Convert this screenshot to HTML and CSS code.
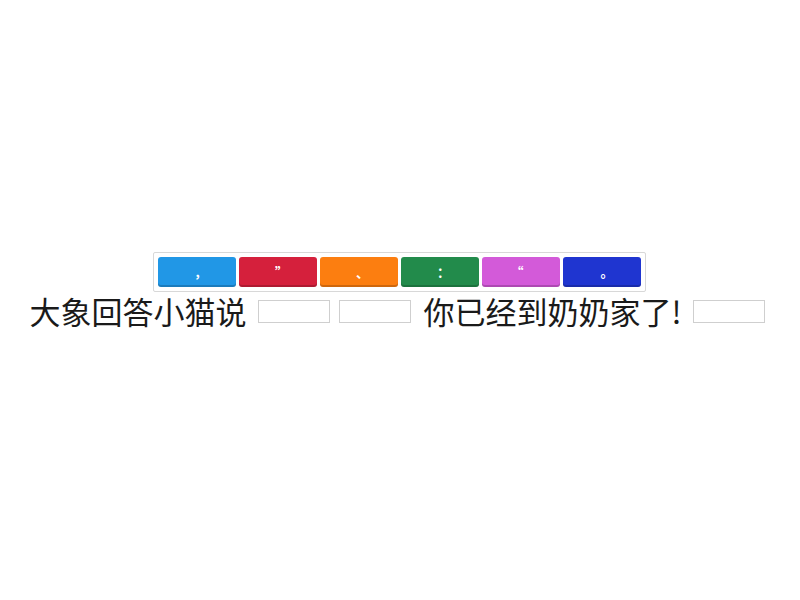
FILE: index.html
```html
<!DOCTYPE html>
<html lang="zh">
<head>
<meta charset="utf-8">
<title>标点符号</title>
<link rel="stylesheet" href="styles.css">
</head>
<body>
<main class="page">
  <div class="palette">
    <div class="tile blue nudge-right">，</div>
    <div class="tile red nudge-right">”</div>
    <div class="tile orange nudge-right">、</div>
    <div class="tile green nudge-right">：</div>
    <div class="tile purple nudge-left">“</div>
    <div class="tile navy nudge-far">。</div>
  </div>
  <div class="sentence">
    <span class="text first">大象回答小猫说</span>
    <span class="blank"></span>
    <span class="blank"></span>
    <span class="text second">你已经到奶奶家了!</span>
    <span class="blank"></span>
  </div>
</main>
</body>
</html>
```
FILE: styles.css
```css
html, body {
  margin: 0;
  padding: 0;
  background: #ffffff;
}
body {
  width: 800px;
  height: 600px;
  font-family: "Noto Sans CJK SC", "Noto Sans", sans-serif;
}
.page {
  display: flex;
  flex-direction: column;
  align-items: center;
  padding-top: 252px;
}
.palette {
  display: flex;
  gap: 3px;
  padding: 4px;
  border: 1px solid #d8d8d8;
  border-radius: 2px;
  margin-left: -1px;
}
.tile {
  box-sizing: border-box;
  width: 78px;
  height: 30px;
  border-radius: 3px;
  color: #ffffff;
  font-size: 13px;
  font-weight: 700;
  line-height: 30px;
  text-align: center;
  box-shadow: inset 0 -2px 0 rgba(0, 0, 0, 0.18);
}
.nudge-right { padding-left: 7px; }
.nudge-far { padding-left: 10px; }
.nudge-left { padding-right: 8px; }
.blue { background: #2197e6; }
.red { background: #d5203c; }
.orange { background: #fc7e10; }
.green { background: #228b4b; }
.purple { background: #d35ad9; }
.navy { background: #1f35d0; }
.sentence {
  display: flex;
  align-items: center;
  gap: 9px;
  margin-right: 6px;
  height: 40px;
  margin-top: -1px;
}
.text {
  font-size: 31px;
  line-height: 40px;
  color: #1a1a1a;
}
.first { padding-right: 3px; }
.second { padding-left: 3px; padding-right: 2px; }
.blank {
  width: 70px;
  height: 21px;
  border: 1px solid #cfcfcf;
  background: #ffffff;
}
```
